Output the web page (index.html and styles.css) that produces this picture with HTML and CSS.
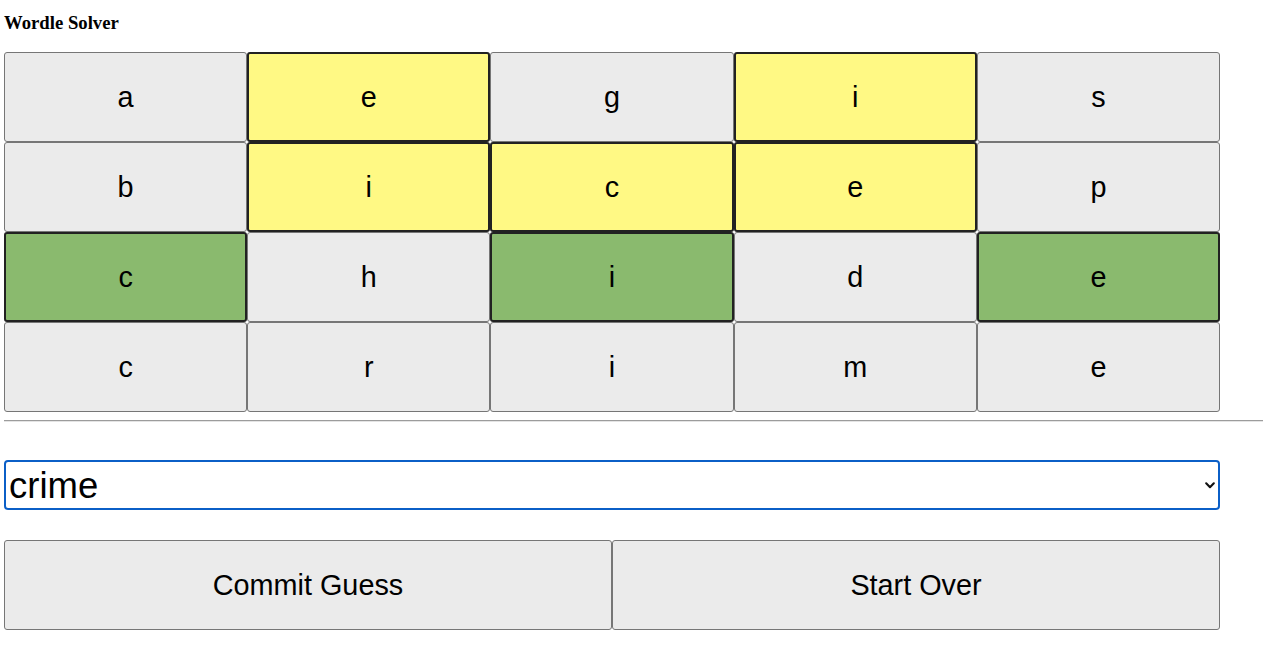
FILE: index.html
```html
<!DOCTYPE html>
<html lang="en">
<head>
<meta charset="utf-8">
<title>Wordle Solver</title>
<link rel="stylesheet" href="styles.css">
</head>
<body>
<div class="app">
  <h3 class="title">Wordle Solver</h3>
  <div class="board">
    <button class="cell">a</button>
    <button class="cell present">e</button>
    <button class="cell">g</button>
    <button class="cell present">i</button>
    <button class="cell">s</button>

    <button class="cell">b</button>
    <button class="cell present">i</button>
    <button class="cell present">c</button>
    <button class="cell present">e</button>
    <button class="cell">p</button>

    <button class="cell correct">c</button>
    <button class="cell">h</button>
    <button class="cell correct">i</button>
    <button class="cell">d</button>
    <button class="cell correct">e</button>

    <button class="cell">c</button>
    <button class="cell">r</button>
    <button class="cell">i</button>
    <button class="cell">m</button>
    <button class="cell">e</button>
  </div>
  <hr class="divider">
  <div class="select-wrap">
    <select class="guess-select">
      <option>crime</option>
      <option>prime</option>
      <option>grime</option>
    </select>
    <svg class="chevron" width="10" height="7" viewBox="0 0 10 7" aria-hidden="true">
      <polyline points="1.2,1.3 5,5.2 8.8,1.3" fill="none" stroke="#111" stroke-width="2.1" stroke-linecap="round" stroke-linejoin="round"/>
    </svg>
  </div>
  <div class="actions">
    <button class="action">Commit Guess</button>
    <button class="action">Start Over</button>
  </div>
</div>
</body>
</html>
```
FILE: styles.css
```css
html, body {
  margin: 0;
  padding: 0;
  background: #ffffff;
}

.app {
  padding: 12px 0 0 4px;
  display: flex;
  flex-direction: column;
  align-items: flex-start;
}

.title {
  margin: 0 0 18px 0;
  font-family: "Liberation Serif", "Times New Roman", serif;
  font-weight: bold;
  font-size: 18.72px;
  line-height: 22px;
  color: #000;
}

.board {
  display: grid;
  grid-template-columns: repeat(5, 1fr);
  grid-auto-rows: 90px;
  width: 1216px;
}

.cell {
  box-sizing: border-box;
  margin: 0;
  padding: 0;
  height: 90px;
  background: #ebebeb;
  border: 1px solid #767676;
  border-radius: 3px;
  font-family: "Liberation Sans", Arial, sans-serif;
  font-size: 28.8px;
  color: #000;
  text-align: center;
}

.cell.present {
  background: #fff984;
  border: 2px solid #222222;
}

.cell.correct {
  background: #8aba6e;
  border: 2px solid #222222;
}

.divider {
  align-self: stretch;
  margin: 8px 0 0 0;
  height: 0;
  border: 0;
  border-top: 1px solid #9c9c9c;
  border-bottom: 1px solid #e4e4e4;
}

.select-wrap {
  position: relative;
  margin-top: 38px;
  width: 1216px;
}

.guess-select {
  box-sizing: border-box;
  display: block;
  width: 100%;
  height: 50px;
  margin: 0;
  padding: 0 30px 0 3px;
  -webkit-appearance: none;
  appearance: none;
  background: #fff;
  border: 2px solid #0b5fc7;
  border-radius: 4px;
  outline: none;
  font-family: "Liberation Sans", Arial, sans-serif;
  font-size: 36.5px;
  color: #000;
}

.chevron {
  position: absolute;
  right: 5px;
  top: 22px;
  pointer-events: none;
}

.actions {
  display: flex;
  margin-top: 30px;
  width: 1216px;
}

.action {
  box-sizing: border-box;
  flex: 1 1 0;
  height: 90px;
  margin: 0;
  padding: 0;
  background: #ebebeb;
  border: 1px solid #767676;
  border-radius: 3px;
  font-family: "Liberation Sans", Arial, sans-serif;
  font-size: 28.8px;
  color: #000;
  text-align: center;
}
```
